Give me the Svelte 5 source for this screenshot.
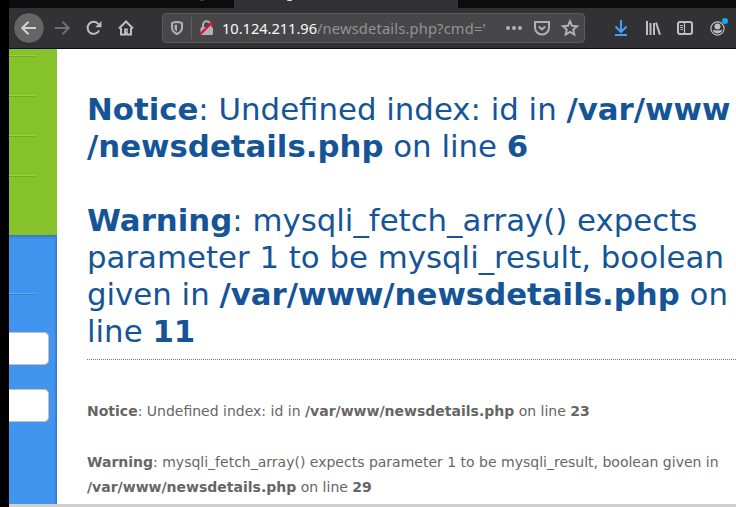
<script>
  const menuRules = [0, 1, 2, 3];
</script>

<div class="window">
  <div class="tabs"><i class="trace"></i><div class="tab"><i class="title-edge"></i></div></div>
  <div class="toolbar">
    <span class="back"><svg width="16" height="16" viewBox="0 0 16 16"><path d="M15 8H1M7.5 1.8 1.3 8l6.2 6.2" /></svg></span>
    <svg class="forward" width="16" height="16" viewBox="0 0 16 16"><path d="M1 8h14M8.5 1.8 14.7 8l-6.2 6.2" /></svg>
    <svg class="reload" width="16" height="16" viewBox="0 0 16 16"><path d="M13.1 10.3A6 6 0 1 1 12.4 4.2" /><path class="fill" d="M15.5 1v6.2H9.2z" /></svg>
    <svg class="home" width="16" height="16" viewBox="0 0 16 16"><path d="M1 8.5 8 1.5l7 7M3 8v6.5h10V8" /><path class="fill" d="M6.2 8.5h3.6V14H6.2z" /><path class="hole" d="M8.1 10.5h1v1h-1z" /></svg>

    <div class="address">
      <svg class="shield" width="12" height="14" viewBox="0 0 12 14"><path d="M1 2.2Q3.5 1 6 1t5 1.2V6.5Q11 10.7 6 13 1 10.7 1 6.5z" /><path class="fill" d="M6 3.5q-1.4 0-2.5.5v2.7Q3.5 9 6 10.6z" /></svg>
      <i class="divider"></i>
      <svg class="lock" width="15" height="16" viewBox="0 0 15 16"><path d="M4 8V5a3.7 3.7 0 0 1 7.4 0v3" /><rect class="fill" x="1.5" y="7" width="12.5" height="8" rx="1.5" /><path class="strike" d="M1.2 14.3 13.8 1.7" /></svg>
      <span class="url"><b>10.124.211.96</b>/newsdetails.php?cmd='</span>
      <svg class="dots" width="16" height="4" viewBox="0 0 16 4"><circle cx="2" cy="2" r="2" /><circle cx="8" cy="2" r="2" /><circle cx="14" cy="2" r="2" /></svg>
      <svg class="pocket" width="16" height="16" viewBox="0 0 16 16"><path d="M1 2h14v5.5a7 7 0 0 1-14 0z" /><path d="m4.8 6.5 3.2 3 3.2-3" /></svg>
      <svg class="star" width="16" height="16" viewBox="0 0 16 16"><path d="m8 1.2 2 4.5 5 .6-3.7 3.3 1 4.9L8 12l-4.3 2.5 1-4.9L1 6.3l5-.6z" /></svg>
    </div>

    <svg class="download" width="14" height="16" viewBox="0 0 14 16"><path d="M7 0v12M1.5 6.5 7 12l5.5-5.5M1 15h12" /></svg>
    <svg class="library" width="16" height="16" viewBox="0 0 16 16"><path d="M2 1v14M5.5 3v12M9 3v12M11 2.5l4 12.3" /></svg>
    <svg class="sidebar" width="16" height="14" viewBox="0 0 16 14"><rect x="1" y="1" width="14" height="12" rx="2" /><path class="thin" d="M7.5 1v12M3 4.5h3M3 6.5h3M3.5 8.5H6" /></svg>
    <div class="account">
      <svg width="15" height="15" viewBox="0 0 15 15"><circle class="thin" cx="7.5" cy="7.5" r="6.6" /><circle class="fill" cx="7.5" cy="5.6" r="3" /><path class="fill" d="M3 8.6q1 .9 4.5.9t4.5-.9Q12 12.4 7.5 12.4T3 8.6z" /></svg>
      <i class="badge"></i>
    </div>
  </div>

  <div class="page">
    <aside>
      <div class="green">{#each menuRules as rule (rule)}<div class="rule"></div>{/each}</div>
      <div class="blue"><div class="rule"></div><div class="field first"></div><div class="field"></div></div>
    </aside>
    <main>
      <h1>
        <b>Notice</b>: Undefined index: id in <b>/var/www<br />/newsdetails.php</b> on line <b>6</b><br /><br />
        <b>Warning</b>: mysqli_fetch_array() expects<br />parameter 1 to be mysqli_result, boolean<br />given in <b>/var/www/newsdetails.php</b> on<br />line <b>11</b>
      </h1>
      <hr />
      <p><b>Notice</b>: Undefined index: id in <b>/var/www/newsdetails.php</b> on line <b>23</b></p>
      <p class="warning"><b>Warning</b>: mysqli_fetch_array() expects parameter 1 to be mysqli_result, boolean given in<br /><b>/var/www/newsdetails.php</b> on line <b>29</b></p>
    </main>
  </div>
  <footer></footer>
</div>

<style>
  :global(body) { background: #000; overflow: hidden; }
  .window { box-sizing: border-box; width: 736px; height: 507px; padding-left: 9px; background: #000; display: flex; flex-direction: column; overflow: hidden; }
  .tabs { height: 8px; flex: none; background: #0c0c0d; display: flex; }
  .trace { width: 4px; height: 1px; margin-left: 191px; background: #3c3c3e; }
  .tab { width: 224px; height: 8px; margin-left: 30px; background: #323234; }
  .title-edge { display: block; width: 5px; height: 1px; margin-left: 53px; background: linear-gradient(90deg, #6da5d3, #f4f4f4 50%, #c9a274); }
  .toolbar { box-sizing: border-box; height: 41px; flex: none; background: #323234; border-bottom: 1px solid #0c0c0d; display: flex; align-items: center; }
  svg { display: block; flex: none; fill: none; stroke: #bfbfc0; stroke-width: 2; overflow: visible; }
  .fill { fill: #bfbfc0; stroke: none; }
  .back { width: 30px; height: 30px; margin-left: 4px; border-radius: 50%; background: #656566; border: 1px solid #29292b; flex: none; display: flex; align-items: center; justify-content: center; }
  .back svg { stroke: #d2d2d3; }
  .forward { margin-left: 9px; stroke: #707072; }
  .reload, .home { margin-left: 16px; }
  .hole { fill: #323234; stroke: none; }
  .address { box-sizing: border-box; width: 423px; height: 30px; margin-left: 28px; border: 1px solid #5b5b5d; border-radius: 4px; background: #474749; display: flex; align-items: center; flex: none; }
  .address svg { stroke: #b1b1b2; }
  .address .fill { fill: #b1b1b2; }
  .shield { margin-left: 8px; }
  .divider { width: 1px; height: 22px; background: #606063; margin-left: 8px; }
  .lock { margin-left: 7px; }
  .address .strike { stroke: #ed0039; }
  .url { width: 283px; margin-left: 8px; white-space: nowrap; font: 14.667px/24px "Noto Sans", sans-serif; letter-spacing: 0.17px; color: #939395; }
  .url b { font-weight: 400; letter-spacing: -0.05px; color: #f9f9fa; }
  .address .dots { fill: #b1b1b2; stroke: none; margin-left: 1px; }
  .pocket, .star { margin-left: 12px; }
  .download { margin-left: 29px; stroke: #459fff; }
  .library { margin-left: 17px; }
  .sidebar { margin-left: 16px; }
  .account { position: relative; margin-left: 17px; }
  .thin { stroke-width: 1.2; }
  .badge { position: absolute; left: 12px; top: -3px; width: 6px; height: 6px; border-radius: 50%; background: #00b3f4; }
  .page { flex: 1; min-height: 0; display: flex; background: #fff; overflow: hidden; }
  aside { width: 48px; flex: none; display: flex; flex-direction: column; }
  .rule { width: 27px; height: 1px; background: repeating-linear-gradient(90deg, #b0dc5c 0 1px, transparent 1px 2px); border-bottom: 1px dotted #659b19; margin-bottom: 38px; }
  .green { box-sizing: border-box; height: 186px; padding-top: 6px; background: #86c32a; flex: none; }
  .blue { box-sizing: border-box; flex: 1; padding-top: 58px; background: linear-gradient(#3274b8 0, #3b88da 2px, transparent 5px), linear-gradient(90deg, transparent 45px, #3275ba 48px), #4295ef; }
  .blue .rule { background: repeating-linear-gradient(90deg, #82bcf7 0 1px, transparent 1px 2px); border-bottom-color: #226eb9; margin-bottom: 37px; }
  .field { box-sizing: border-box; width: 40px; height: 33px; border: 1px solid #c3c0bc; border-left: 0; border-radius: 0 5px 5px 0; background: #fff; margin-top: 24px; }
  .field.first { margin-top: 0; }
  main { flex: 1; min-width: 0; padding: 42px 0 0 30px; font-family: "DejaVu Sans", sans-serif; white-space: nowrap; }
  h1 { margin: 0; color: #155597; font-size: 30.8px; line-height: 37px; font-weight: 400; }
  hr { margin: 9px 0 0; border: 0; border-top: 1px dotted #777; }
  p { margin: 39px 0 0; font-size: 14px; line-height: 25px; color: #666; }
  .warning { margin-top: 26px; }
  footer { height: 3px; flex: none; background: #d0cfcb; }
</style>
